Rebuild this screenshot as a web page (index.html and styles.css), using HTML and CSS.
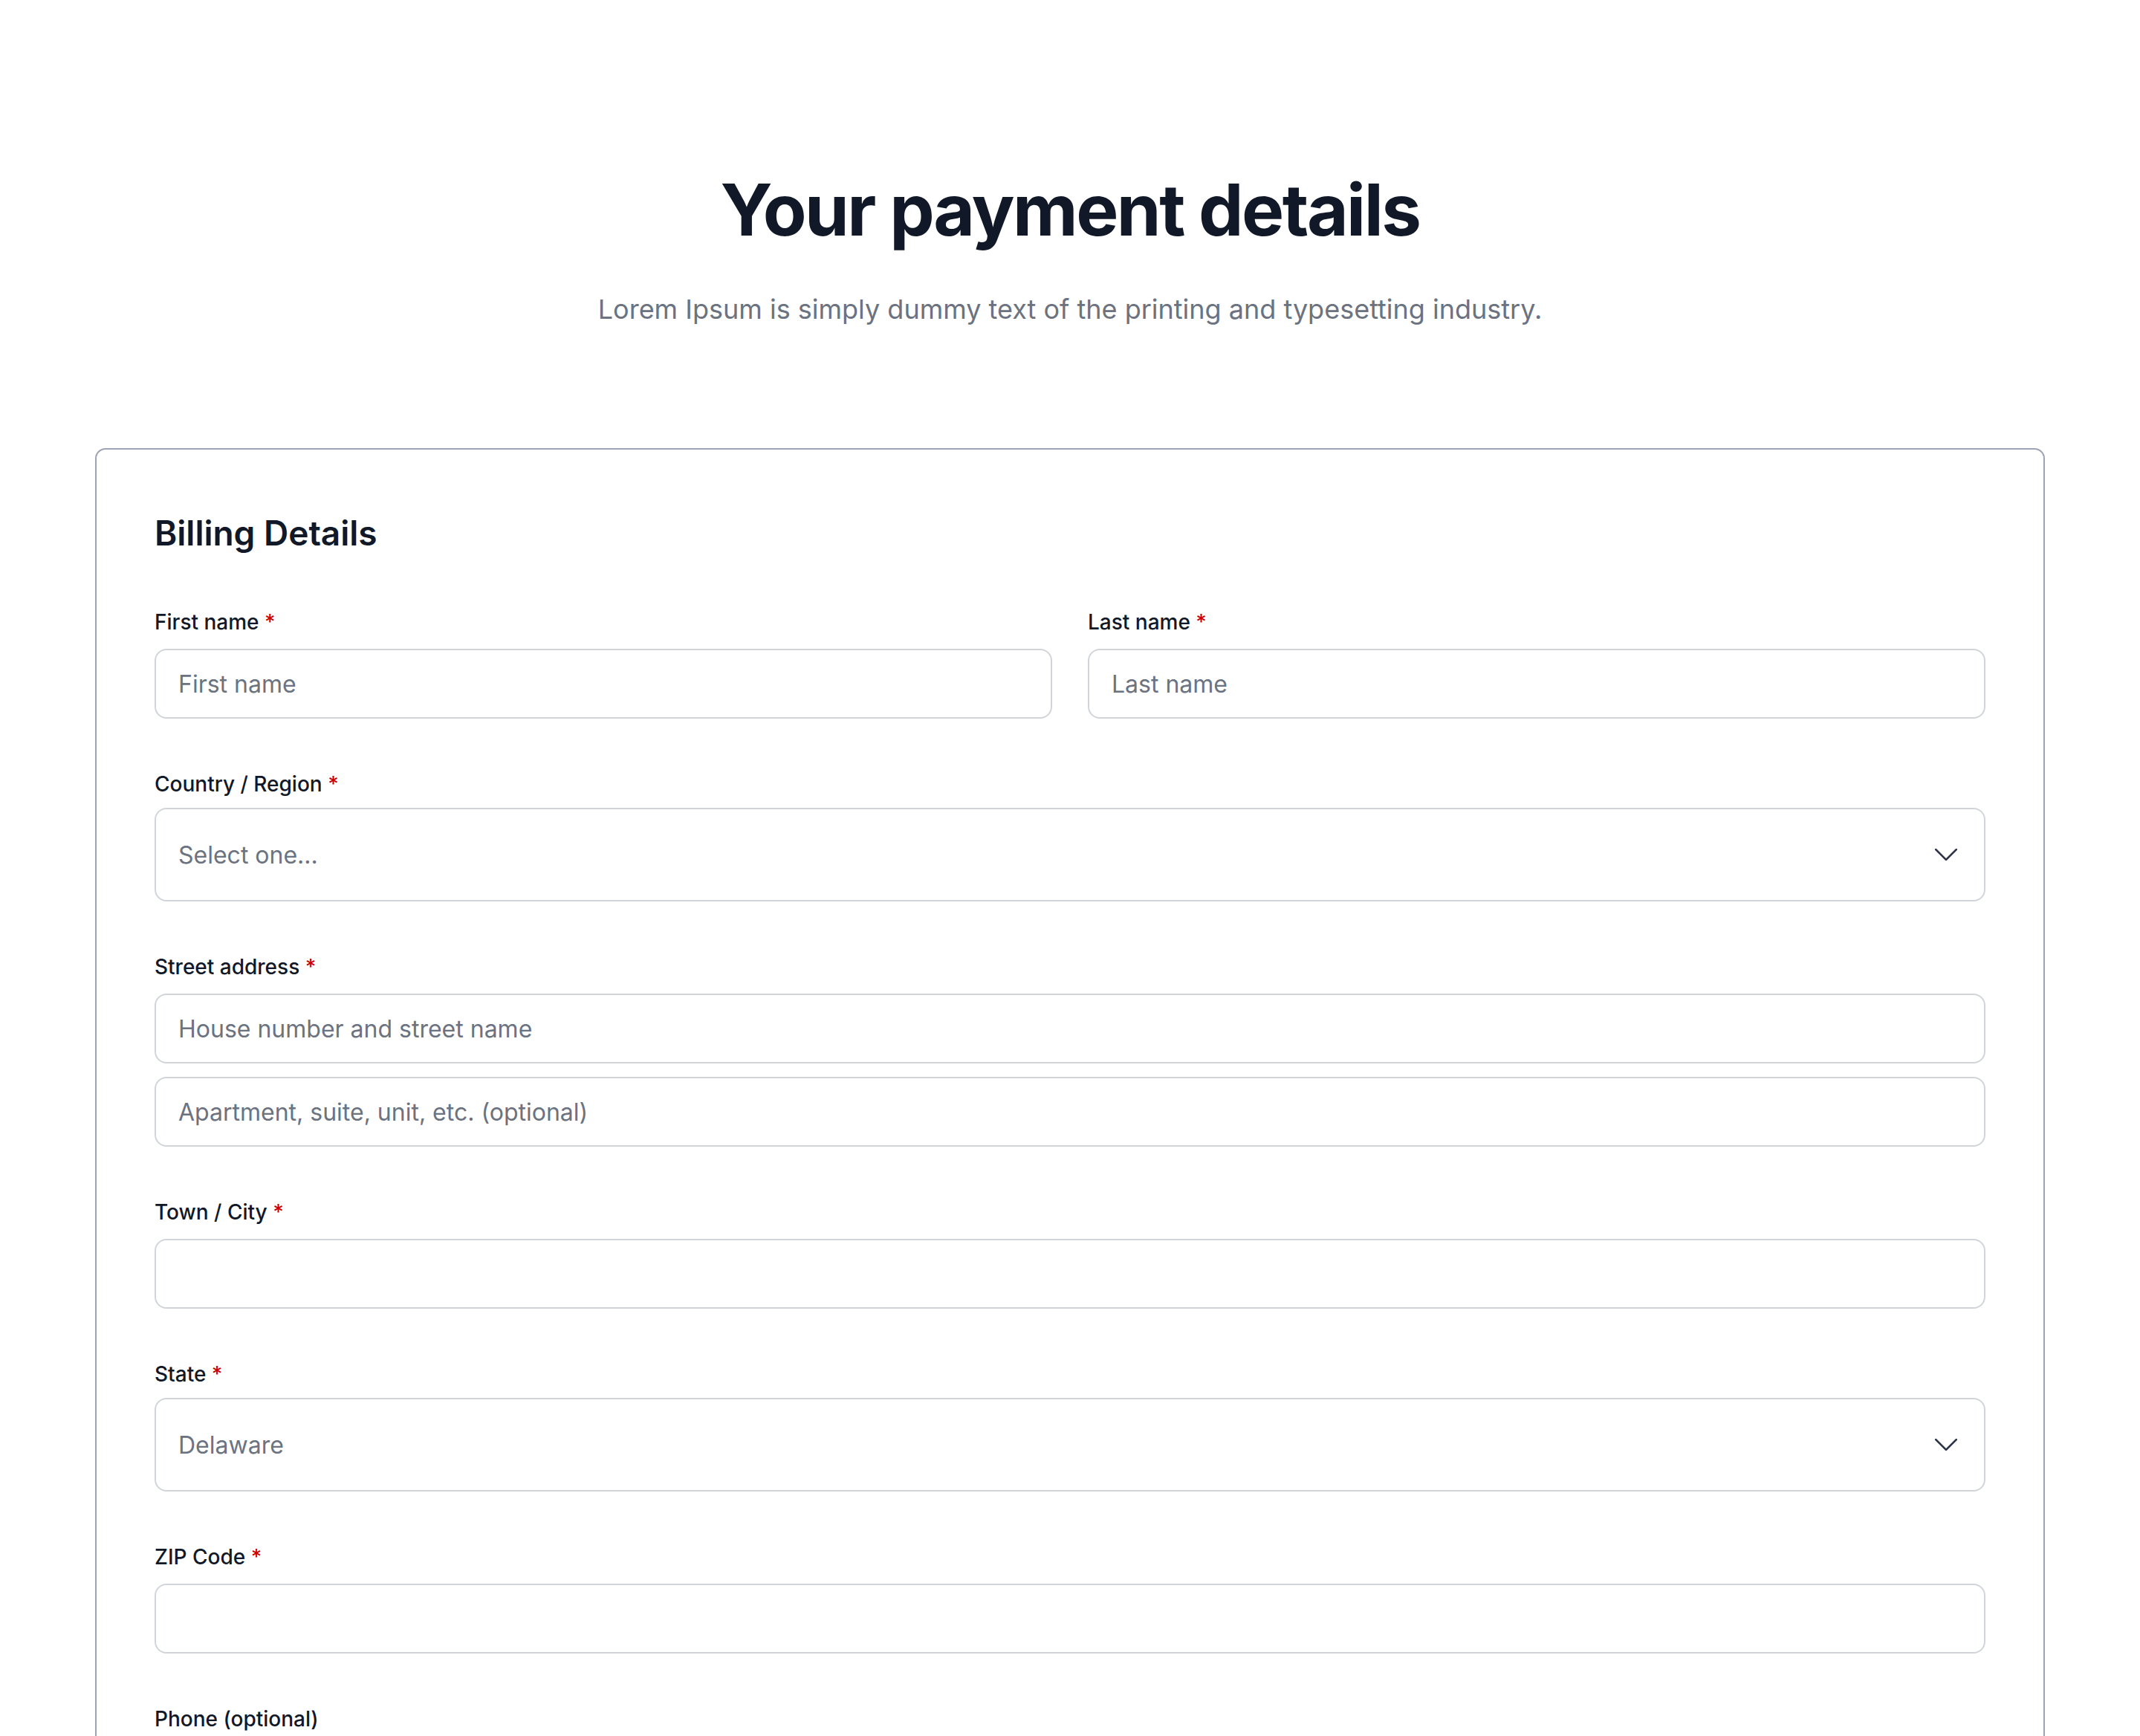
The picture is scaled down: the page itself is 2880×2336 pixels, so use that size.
FILE: index.html
```html
<!DOCTYPE html>
<html lang="en">
<head>
    <meta charset="UTF-8">
    <meta name="viewport" content="width=device-width, initial-scale=1.0">
    <title>Your payment details</title>
    <link rel="stylesheet" href="styles.css">
</head>
<body>
    <header class="page-header">
        <h1>Your payment details</h1>
        <p class="subtitle">Lorem Ipsum is simply dummy text of the printing and typesetting industry.</p>
    </header>
    <form class="billing-card">
        <h2>Billing Details</h2>
        <div class="row two-col">
            <div class="field">
                <label for="first-name">First name <span class="req">*</span></label>
                <input type="text" id="first-name" placeholder="First name">
            </div>
            <div class="field">
                <label for="last-name">Last name <span class="req">*</span></label>
                <input type="text" id="last-name" placeholder="Last name">
            </div>
        </div>
        <div class="field">
            <label for="country">Country / Region <span class="req">*</span></label>
            <div class="select-wrap">
                <select id="country">
                    <option>Select one...</option>
                    <option>United States</option>
                    <option>Canada</option>
                </select>
                <svg class="chevron" viewBox="0 0 24 24" fill="none" stroke="currentColor" stroke-width="1.5"><path stroke-linecap="round" stroke-linejoin="round" d="m19.5 8.25-7.5 7.5-7.5-7.5"/></svg>
            </div>
        </div>
        <div class="field">
            <label for="street">Street address <span class="req">*</span></label>
            <input type="text" id="street" placeholder="House number and street name">
            <input type="text" id="street2" class="extra" placeholder="Apartment, suite, unit, etc. (optional)">
        </div>
        <div class="field">
            <label for="city">Town / City <span class="req">*</span></label>
            <input type="text" id="city">
        </div>
        <div class="field">
            <label for="state">State <span class="req">*</span></label>
            <div class="select-wrap">
                <select id="state">
                    <option>Delaware</option>
                    <option>Maryland</option>
                    <option>New Jersey</option>
                </select>
                <svg class="chevron" viewBox="0 0 24 24" fill="none" stroke="currentColor" stroke-width="1.5"><path stroke-linecap="round" stroke-linejoin="round" d="m19.5 8.25-7.5 7.5-7.5-7.5"/></svg>
            </div>
        </div>
        <div class="field">
            <label for="zip">ZIP Code <span class="req">*</span></label>
            <input type="text" id="zip">
        </div>
        <div class="field">
            <label for="phone">Phone (optional)</label>
            <input type="tel" id="phone">
        </div>
    </form>
</body>
</html>
```
FILE: styles.css
```css
body {
    font-family: 'Inter', 'Liberation Sans', sans-serif;
    background-color: #fff;
    color: #111827;
    margin: 0;
    padding: 224px 0 160px;
}
.page-header {
    text-align: center;
}
h1 {
    font-size: 96px;
    line-height: 116px;
    font-weight: 700;
    letter-spacing: -0.026em;
    margin: 0;
    color: #111827;
}
.subtitle {
    font-size: 36px;
    line-height: 52px;
    color: #6b7280;
    margin: 50px 0 0;
}
.billing-card {
    box-sizing: border-box;
    width: 2624px;
    margin: 161px auto 0;
    padding: 80px 78px;
    border: 2px solid #9ea3b6;
    border-radius: 14px;
    display: flex;
    flex-direction: column;
    gap: 68px;
}
h2 {
    font-size: 46px;
    line-height: 64px;
    font-weight: 600;
    margin: 0;
}
.two-col {
    display: grid;
    grid-template-columns: 1fr 1fr;
    gap: 48px;
}
.field {
    display: flex;
    flex-direction: column;
}
label {
    font-size: 28px;
    line-height: 40px;
    font-weight: 500;
    margin-bottom: 16px;
}
.req {
    color: #c00;
}
input, select {
    box-sizing: border-box;
    width: 100%;
    height: 94px;
    padding: 0 30px;
    border: 2px solid #d1d5db;
    border-radius: 16px;
    background-color: #fff;
    font-family: inherit;
    font-size: 32px;
    color: #111827;
    outline: none;
}
input::placeholder {
    color: #6b7280;
}
input.extra {
    margin-top: 18px;
}
.select-wrap {
    position: relative;
    margin-top: -4px;
}
select {
    height: 126px;
    appearance: none;
    color: #6b7280;
}
.chevron {
    position: absolute;
    right: 31px;
    top: 50%;
    width: 44px;
    height: 44px;
    margin-top: -22px;
    color: #2d3348;
    pointer-events: none;
}
```
